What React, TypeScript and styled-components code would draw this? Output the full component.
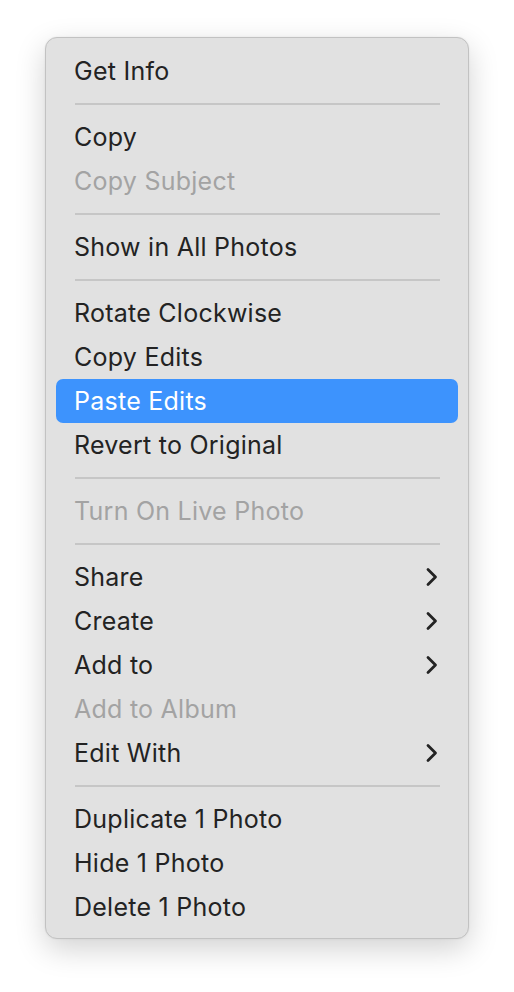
import * as React from "react";
import styled, { createGlobalStyle } from "styled-components";

const GlobalStyle = createGlobalStyle`
  html, body {
    margin: 0;
    padding: 0;
    background: #ffffff;
  }
  * {
    box-sizing: border-box;
  }
`;

const Page = styled.div`
  width: 514px;
  height: 992px;
  padding: 37px 45px 0 45px;
`;

const StyledMenu = styled.div`
  background-color: #e1e1e1;
  border: 1px solid #c2c2c2;
  border-radius: 12px;
  box-shadow: 0 10px 30px rgba(0, 0, 0, 0.18), 0 0 2px rgba(0, 0, 0, 0.08);
  display: flex;
  flex-direction: column;
  font-family: Inter, "Noto Sans", sans-serif;
  padding: 11px 10px 9px 10px;
  width: 424px;
`;

const MenuItemRow = styled.div<{ $disabled?: boolean; $active?: boolean }>`
  align-items: center;
  background-color: ${p => (p.$active ? "#3d93fd" : "transparent")};
  border-radius: 7px;
  color: ${p => (p.$active ? "#ffffff" : p.$disabled ? "#a3a3a3" : "#232323")};
  display: flex;
  font-size: 25px;
  height: 44px;
  justify-content: space-between;
  letter-spacing: 0.25px;
  padding: 0 19px 0 18px;
`;

const MenuSeparator = styled.div`
  align-items: center;
  display: flex;
  height: 22px;
  padding: 0 18px 0 19px;
  &::after {
    background-color: #c6c6c6;
    content: "";
    height: 2px;
    width: 100%;
  }
`;

const Chevron = () => (
  <svg width="14" height="22" viewBox="0 0 14 22">
    <path d="M3 3.5 L10.5 11 L3 18.5" fill="none" stroke="#232323" strokeWidth="2.8" strokeLinecap="round" strokeLinejoin="round" />
  </svg>
);

type Entry =
  | { kind: "item"; label: string; disabled?: boolean; active?: boolean; submenu?: boolean }
  | { kind: "sep" };

const entries: Entry[] = [
  { kind: "item", label: "Get Info" },
  { kind: "sep" },
  { kind: "item", label: "Copy" },
  { kind: "item", label: "Copy Subject", disabled: true },
  { kind: "sep" },
  { kind: "item", label: "Show in All Photos" },
  { kind: "sep" },
  { kind: "item", label: "Rotate Clockwise" },
  { kind: "item", label: "Copy Edits" },
  { kind: "item", label: "Paste Edits", active: true },
  { kind: "item", label: "Revert to Original" },
  { kind: "sep" },
  { kind: "item", label: "Turn On Live Photo", disabled: true },
  { kind: "sep" },
  { kind: "item", label: "Share", submenu: true },
  { kind: "item", label: "Create", submenu: true },
  { kind: "item", label: "Add to", submenu: true },
  { kind: "item", label: "Add to Album", disabled: true },
  { kind: "item", label: "Edit With", submenu: true },
  { kind: "sep" },
  { kind: "item", label: "Duplicate 1 Photo" },
  { kind: "item", label: "Hide 1 Photo" },
  { kind: "item", label: "Delete 1 Photo" },
];

export default function App() {
  return (
    <>
      <GlobalStyle />
      <Page>
        <StyledMenu>
          {entries.map((e, i) =>
            e.kind === "sep" ? (
              <MenuSeparator key={i} />
            ) : (
              <MenuItemRow key={i} $disabled={e.disabled} $active={e.active}>
                <span>{e.label}</span>
                {e.submenu && <Chevron />}
              </MenuItemRow>
            )
          )}
        </StyledMenu>
      </Page>
    </>
  );
}
